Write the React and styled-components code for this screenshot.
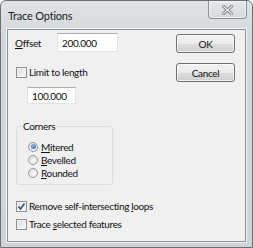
import styled, { createGlobalStyle } from 'styled-components';

const GlobalStyle = createGlobalStyle`
  html, body {
    margin: 0;
    padding: 0;
    background: #ffffff;
  }
  body {
    font-family: Lato, "Open Sans", Arial, sans-serif;
  }
`;

const Window = styled.div`
  width: 253px;
  height: 248px;
  box-sizing: border-box;
  border: 1px solid #6b6f73;
  border-radius: 6px 6px 0 0;
  background: linear-gradient(#dfe3e6, #d3d7da 40px, #d1d4d7);
  display: flex;
  flex-direction: column;
`;

const TitleBar = styled.div`
  height: 28px;
  flex-shrink: 0;
  display: flex;
  justify-content: space-between;
  align-items: flex-start;
  padding: 0 5px 0 7px;
`;

const Title = styled.span`
  font-size: 11px;
  letter-spacing: -0.2px;
  color: #1a1a1a;
  line-height: 28px;
  margin-top: 1px;
`;

const CloseButton = styled.div`
  width: 39px;
  height: 18px;
  box-sizing: border-box;
  border: 1px solid #8a8f94;
  border-top: none;
  border-radius: 0 0 4px 4px;
  background: linear-gradient(#e6e9ec, #d5d9dc);
  box-shadow: inset 0 0 0 1px rgba(255, 255, 255, 0.6);
  display: flex;
  align-items: center;
  justify-content: center;
`;

const Frame = styled.div`
  flex: 1;
  padding: 0 6px 5px;
  display: flex;
`;

const Client = styled.div`
  flex: 1;
  background: #f0f0f0;
  border: 1px solid #8d9196;
  box-shadow: 0 0 0 1px #f4f5f6;
  display: flex;
  justify-content: space-between;
  padding: 3px 10px 0 7px;
  font-size: 10px;
  letter-spacing: -0.35px;
  color: #111;
  white-space: nowrap;
`;

const LeftColumn = styled.div`
  display: flex;
  flex-direction: column;
`;

const RightColumn = styled.div`
  display: flex;
  flex-direction: column;
  gap: 10px;
  padding-top: 1px;
`;

const FieldRow = styled.div`
  display: flex;
  align-items: center;
  height: 19px;
`;

const FieldLabel = styled.span`
  width: 42px;
`;

const TextBox = styled.div`
  width: ${(p) => p.width}px;
  height: ${(p) => p.height}px;
  box-sizing: border-box;
  background: #fff;
  border: 1px solid #dfe4e9;
  border-top-color: #abadb3;
  padding-left: 4px;
  display: flex;
  align-items: center;
  margin-left: ${(p) => p.indent || 0}px;
  margin-top: ${(p) => p.top || 0}px;
`;

const CheckRow = styled.label`
  display: flex;
  align-items: center;
  gap: 2px;
  height: 14px;
  margin-top: ${(p) => p.top || 0}px;
  margin-left: 1px;
`;

const CheckBox = styled.span`
  width: 11px;
  height: 11px;
  flex-shrink: 0;
  box-sizing: border-box;
  border: 1px solid #8f8f8f;
  background: linear-gradient(135deg, #dcdcdc, #fbfbfb);
  box-shadow: inset 0 0 0 1px #f4f4f4;
  display: flex;
  align-items: center;
  justify-content: center;
`;

const GroupBox = styled.fieldset`
  width: 97px;
  box-sizing: border-box;
  margin: 16px 0 0 1px;
  padding: 8px 0 5px 11px;
  border: 1px solid #d5dfe5;
  border-radius: 3px;
  display: flex;
  flex-direction: column;
  min-width: 0;

  legend {
    padding: 0 1px;
    margin-left: -6px;
  }
`;

const RadioRow = styled.label`
  display: flex;
  align-items: center;
  gap: 3px;
  height: 13px;
`;

const Radio = styled.span`
  width: 10px;
  height: 10px;
  flex-shrink: 0;
  box-sizing: border-box;
  border-radius: 50%;
  border: 1px solid #9a9a9a;
  background: radial-gradient(circle at 60% 65%, #fafafa, #d6d6d6);
  display: flex;
  align-items: center;
  justify-content: center;

  &::after {
    content: '';
    width: 5px;
    height: 5px;
    border-radius: 50%;
    background: radial-gradient(circle at 40% 35%, #8fb8e8, #1e5aa8);
    display: ${(p) => (p.checked ? 'block' : 'none')};
  }
`;

const Key = styled.span`
  text-decoration: underline;
  text-underline-offset: 1px;
`;

const Button = styled.div`
  width: 59px;
  height: 19px;
  box-sizing: border-box;
  border: 1px solid #707070;
  border-radius: 3px;
  background: linear-gradient(#f2f2f2 0%, #ebebeb 50%, #dddddd 51%, #cfcfcf 100%);
  box-shadow: inset 0 0 0 1px rgba(255, 255, 255, 0.7);
  display: flex;
  align-items: center;
  justify-content: center;
`;

function CloseGlyph() {
  return (
    <svg width="11" height="10" viewBox="0 0 11 10">
      <path
        d="M1 1 L10 9 M10 1 L1 9"
        stroke="#6d7278"
        strokeWidth="3"
        strokeLinecap="square"
      />
      <path
        d="M1 1 L10 9 M10 1 L1 9"
        stroke="#f4f5f6"
        strokeWidth="1.2"
        strokeLinecap="square"
      />
    </svg>
  );
}

function Tick() {
  return (
    <svg width="9" height="9" viewBox="0 0 9 9">
      <path d="M1.5 4.5 L3.5 7 L7.5 1.5" fill="none" stroke="#2a4a7a" strokeWidth="1.5" />
    </svg>
  );
}

export default function App() {
  return (
    <>
      <GlobalStyle />
      <Window>
        <TitleBar>
          <Title>Trace Options</Title>
          <CloseButton><CloseGlyph /></CloseButton>
        </TitleBar>
        <Frame>
          <Client>
            <LeftColumn>
              <FieldRow>
                <FieldLabel><Key>O</Key>ffset</FieldLabel>
                <TextBox width={61} height={19}>200.000</TextBox>
              </FieldRow>
              <CheckRow top={13}>
                <CheckBox />
                <span>Limit to length</span>
              </CheckRow>
              <TextBox width={49} height={17} indent={12} top={8}>100.000</TextBox>
              <GroupBox>
                <legend>Corners</legend>
                <RadioRow>
                  <Radio checked />
                  <span><Key>M</Key>itered</span>
                </RadioRow>
                <RadioRow>
                  <Radio />
                  <span><Key>B</Key>evelled</span>
                </RadioRow>
                <RadioRow>
                  <Radio />
                  <span><Key>R</Key>ounded</span>
                </RadioRow>
              </GroupBox>
              <CheckRow top={14}>
                <CheckBox><Tick /></CheckBox>
                <span>Remove self-intersecting <Key>l</Key>oops</span>
              </CheckRow>
              <CheckRow top={4}>
                <CheckBox />
                <span>Trace <Key>s</Key>elected features</span>
              </CheckRow>
            </LeftColumn>
            <RightColumn>
              <Button>OK</Button>
              <Button>Cancel</Button>
            </RightColumn>
          </Client>
        </Frame>
      </Window>
    </>
  );
}
